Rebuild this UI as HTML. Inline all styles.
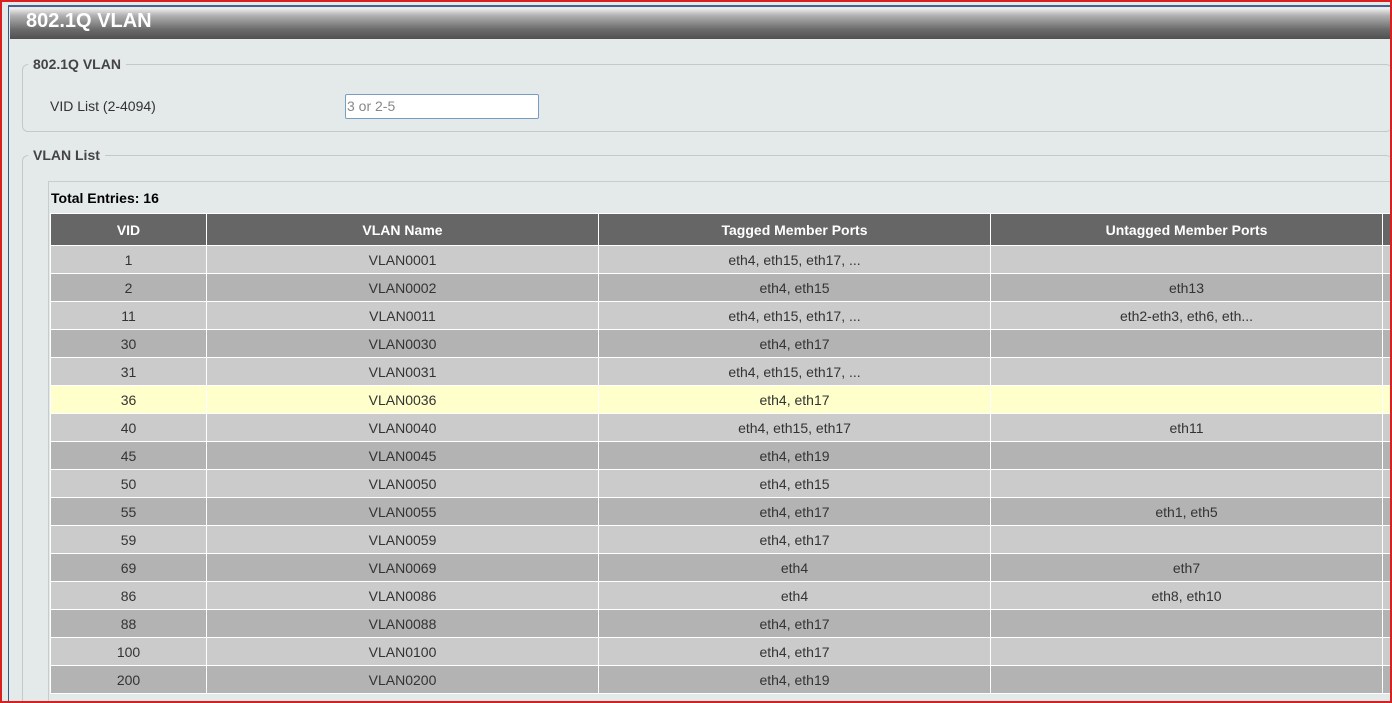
<!DOCTYPE html>
<html style="overflow:hidden;width:1392px;height:703px"><head><style>
*{margin:0;padding:0;box-sizing:border-box}
body{width:1392px;height:703px;overflow:hidden;background:#e4e9e9;font-family:"Liberation Sans",Arial,sans-serif;position:relative}
.frame{position:absolute;left:0;top:0;width:1392px;height:703px;border:2px solid #d92020;pointer-events:none;z-index:10}
.bl{position:absolute;left:8px;top:5px;width:1382px;height:698px;border-left:1px solid #3a5a8a;border-top:2px solid #4a5f8f}
.title{position:absolute;left:10px;top:8px;width:1380px;height:31px;background:linear-gradient(#f0f0f0 0%,#b0b0b0 25%,#6a6a6a 70%,#505050 100%);color:#fff;font-weight:bold;font-size:20px;line-height:26px;padding-left:16px}
.fs{position:absolute;border:1px solid #c4c8c8;border-radius:6px;border-right:none}
.lg{position:absolute;background:#e4e9e9;font-weight:bold;font-size:14px;color:#444;padding:0 5px}
.lbl{position:absolute;left:50px;top:98px;font-size:14px;color:#333}
.inp{position:absolute;left:345px;top:94px;width:194px;height:25px;border:1px solid #7a9cc4;background:#fff;font-size:14px;color:#888;padding-left:1px;line-height:23px;border-radius:2px}
.box{position:absolute;left:48px;top:181px;width:1344px;height:522px;border-top:1px solid #c8cccc;border-left:1px solid #c8cccc}
.tot{position:absolute;left:51px;top:190px;font-size:14px;font-weight:bold;color:#000}
table{position:absolute;left:50px;top:213px;border-collapse:collapse;font-size:14px;color:#333;table-layout:fixed;width:1352px}
td,th{border:1px solid #fff;text-align:center;height:28px;padding:0;white-space:nowrap;overflow:hidden}
th{background:#666;color:#fff;height:32px;font-size:14px}
tr.a td{background:#cbcbcb}
tr.b td{background:#b3b3b3}
tr.h td{background:#ffffcc}
</style></head><body>
<div class="bl"></div>
<div class="title">802.1Q VLAN</div>
<div class="fs" style="left:22px;top:64px;width:1370px;height:68px"></div>
<div class="lg" style="left:28px;top:56px">802.1Q VLAN</div>
<div class="lbl">VID List (2-4094)</div>
<div class="inp">3 or 2-5</div>
<div class="fs" style="left:22px;top:155px;width:1370px;height:560px;border-bottom:none;border-bottom-left-radius:0"></div>
<div class="lg" style="left:28px;top:147px">VLAN List</div>
<div class="box"></div>
<div class="tot">Total Entries: 16</div>
<table>
<colgroup><col style="width:156px"><col style="width:392px"><col style="width:392px"><col style="width:392px"><col style="width:20px"></colgroup>
<tr><th>VID</th><th>VLAN Name</th><th>Tagged Member Ports</th><th>Untagged Member Ports</th><th></th></tr>
<tr class="a"><td>1</td><td>VLAN0001</td><td>eth4, eth15, eth17, ...</td><td></td><td></td></tr>
<tr class="b"><td>2</td><td>VLAN0002</td><td>eth4, eth15</td><td>eth13</td><td></td></tr>
<tr class="a"><td>11</td><td>VLAN0011</td><td>eth4, eth15, eth17, ...</td><td>eth2-eth3, eth6, eth...</td><td></td></tr>
<tr class="b"><td>30</td><td>VLAN0030</td><td>eth4, eth17</td><td></td><td></td></tr>
<tr class="a"><td>31</td><td>VLAN0031</td><td>eth4, eth15, eth17, ...</td><td></td><td></td></tr>
<tr class="h"><td>36</td><td>VLAN0036</td><td>eth4, eth17</td><td></td><td></td></tr>
<tr class="a"><td>40</td><td>VLAN0040</td><td>eth4, eth15, eth17</td><td>eth11</td><td></td></tr>
<tr class="b"><td>45</td><td>VLAN0045</td><td>eth4, eth19</td><td></td><td></td></tr>
<tr class="a"><td>50</td><td>VLAN0050</td><td>eth4, eth15</td><td></td><td></td></tr>
<tr class="b"><td>55</td><td>VLAN0055</td><td>eth4, eth17</td><td>eth1, eth5</td><td></td></tr>
<tr class="a"><td>59</td><td>VLAN0059</td><td>eth4, eth17</td><td></td><td></td></tr>
<tr class="b"><td>69</td><td>VLAN0069</td><td>eth4</td><td>eth7</td><td></td></tr>
<tr class="a"><td>86</td><td>VLAN0086</td><td>eth4</td><td>eth8, eth10</td><td></td></tr>
<tr class="b"><td>88</td><td>VLAN0088</td><td>eth4, eth17</td><td></td><td></td></tr>
<tr class="a"><td>100</td><td>VLAN0100</td><td>eth4, eth17</td><td></td><td></td></tr>
<tr class="b"><td>200</td><td>VLAN0200</td><td>eth4, eth19</td><td></td><td></td></tr>
</table>
<div class="frame"></div>
</body></html>
